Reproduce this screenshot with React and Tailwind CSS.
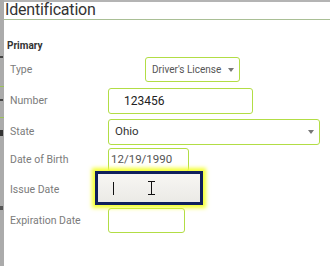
const font = { fontFamily: 'Roboto, "Liberation Sans", sans-serif' }

function Arrow() {
  return <span className="w-0 h-0 border-l-[3px] border-r-[3px] border-t-[4px] border-l-transparent border-r-transparent border-t-[#777]" />
}

function Row({ label, height, top, children }) {
  return (
    <div className={`flex items-center ${height} ${top}`}>
      <div className="w-[104px] pl-[6px] text-[10.5px] text-[#7b7b7b] shrink-0 whitespace-nowrap">{label}</div>
      {children}
    </div>
  )
}

export default function App() {
  return (
    <div className="w-[330px] h-[266px] flex bg-white overflow-hidden" style={font}>
      <div className="w-[4px] shrink-0 bg-[#ababab] flex flex-col">
        <div className="h-[56px]" />
        <div className="h-[2px] w-[3px] bg-[#444]" />
        <div className="h-[28px]" />
        <div className="h-[1px] bg-[#9bc25a]" />
        <div className="h-[12px]" />
        <div className="h-[2px] w-[3px] bg-[#444]" />
        <div className="h-[16px]" />
        <div className="h-[1px] bg-[#9bc25a]" />
        <div className="h-[12px]" />
        <div className="h-[6px] w-[3px] bg-[#333]" />
        <div className="h-[70px]" />
        <div className="h-[4px] w-[3px] bg-[#555]" />
      </div>
      <div className="flex-1 flex flex-col">
        <div className="h-[2px] bg-[#b4b4b4]" />
        <div className="h-[17px] flex items-end pl-[1px] text-[16px] leading-[19px] tracking-[-0.2px] text-[#333]">Identification</div>
        <div className="h-[1px] bg-[#a9bf95]" />
        <div className="mt-[20px] pl-[3px] text-[10px] font-bold text-[#333] leading-[12px]">Primary</div>

        <Row label="Type" height="h-[25px]" top="mt-[5px]">
          <div className="ml-[37px] w-[95px] h-full border border-[#b2dd45] rounded-[3px] flex items-center justify-between pl-[6px] pr-[5px] text-[10px] text-[#555] whitespace-nowrap">
            <span>Driver's License</span>
            <Arrow />
          </div>
        </Row>

        <Row label="Number" height="h-[26px]" top="mt-[6px]">
          <div className="w-[145px] h-full border border-[#b2dd45] rounded-[3px] flex items-center pl-[15px] text-[12px] text-[#222]">123456</div>
        </Row>

        <Row label="State" height="h-[26px]" top="mt-[5px]">
          <div className="w-[212px] h-full border border-[#b2dd45] rounded-[3px] flex items-center justify-between pl-[6px] pr-[5px] text-[11.5px] text-[#333]">
            <span>Ohio</span>
            <Arrow />
          </div>
        </Row>

        <Row label="Date of Birth" height="h-[24px]" top="mt-[3px]">
          <div className="w-[81px] h-full border border-[#b2dd45] rounded-[3px] flex items-center pl-[2px] text-[11.5px] text-[#555] overflow-hidden whitespace-nowrap">12/19/1990</div>
        </Row>

        <Row label="Issue Date" height="h-[26px]" top="mt-[5px]">
          <div className="relative w-[81px] h-full">
            <div className="absolute left-[-13px] top-[-6px] w-[108px] h-[34px] border-[3px] border-[#0f1f5c] bg-gradient-to-b from-[#f7f6f3] to-[#ebeae6] shadow-[0_0_4px_3px_#f4ff30] flex items-center">
              <div className="ml-[15px] w-[1px] h-[13px] bg-[#111]" />
              <div className="ml-[34px] flex flex-col items-center">
                <div className="w-[7px] h-[1px] bg-[#111]" />
                <div className="w-[1px] h-[12px] bg-[#111]" />
                <div className="w-[7px] h-[1px] bg-[#111]" />
              </div>
            </div>
          </div>
        </Row>

        <Row label="Expiration Date" height="h-[25px]" top="mt-[5px]">
          <div className="w-[77px] h-full border border-[#b2dd45] rounded-[3px]" />
        </Row>
      </div>
    </div>
  )
}
